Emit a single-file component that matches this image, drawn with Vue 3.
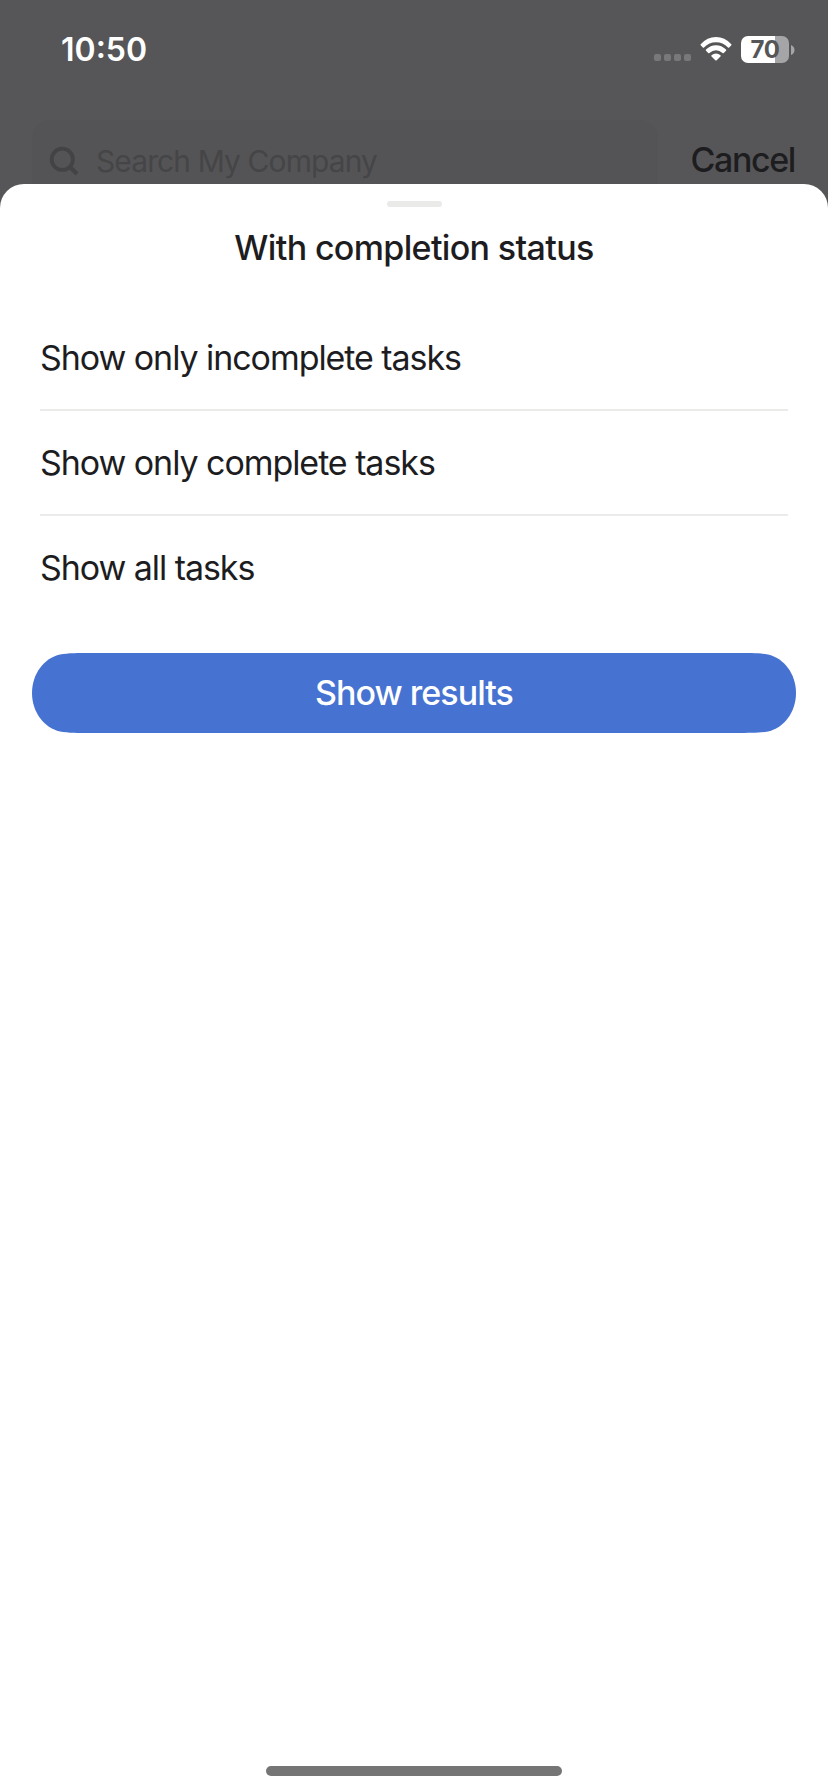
<script setup>
const options = [
  'Show only incomplete tasks',
  'Show only complete tasks',
  'Show all tasks',
]
</script>

<template>
  <div class="screen">
    <header class="status">
      <span class="time">10:50</span>
      <div class="indicators">
        <div class="signal"><i v-for="n in 4" :key="n"></i></div>
        <svg class="wifi" width="32" height="25" viewBox="0 0 32 25">
          <path d="M.7 8.2Q7.2 1 16 1t15.300 7.200q.5.600 0 1.100l-2.100 2.100q-.6.500-1.200 0Q23 6.200 16 6.200T4 11.400q-.600.500-1.200 0L.7 9.300q-.5-.5 0-1.100Z" />
          <path d="M6 13.600Q10.400 9.200 16 9.200t10 4.400q.5.600 0 1.200l-2.200 2.100q-.600.500-1.200 0Q19.500 14.300 16 14.300t-6.600 2.600q-.600.500-1.200 0L6 14.800q-.5-.6 0-1.200Z" />
          <path d="M11.500 19.200Q13.500 17.400 16 17.400t4.500 1.800q.5.600 0 1.200l-3.800 3.800q-.7.700-1.400 0l-3.800-3.800q-.5-.6 0-1.200Z" />
        </svg>
        <div class="battery">
          <div class="cell"><span>70</span></div>
          <svg width="4" height="10" viewBox="0 0 4 10"><path d="M0 0q3.500 1.500 3.500 5T0 10Z" fill="#a5a5a7" /></svg>
        </div>
      </div>
    </header>

    <div class="search-row">
      <div class="search">
        <svg width="30" height="30" viewBox="0 0 30 30" fill="none" stroke="#434345" stroke-width="3.800">
          <circle cx="13.300" cy="13.300" r="10.600" />
          <path d="m21 21 7 7" stroke-width="4.200" />
        </svg>
        <span class="placeholder">Search My Company</span>
      </div>
      <span class="cancel">Cancel</span>
    </div>

    <main class="sheet">
      <div class="grabber"></div>
      <h1>With completion status</h1>
      <ul>
        <li v-for="option in options" :key="option">{{ option }}</li>
      </ul>
      <button type="button">Show results</button>
      <div class="home"></div>
    </main>
  </div>
</template>

<style>
body {
  margin: 0;
  background: #565658;
}
</style>

<style scoped>
.screen {
  box-sizing: border-box;
  width: 828px;
  height: 1792px;
  display: flex;
  flex-direction: column;
  overflow: hidden;
  background: #565658;
  color: #1d1d1f;
  font-family: Inter, "Liberation Sans", sans-serif;
  white-space: nowrap;
}
.status {
  box-sizing: border-box;
  height: 120px;
  flex: none;
  display: flex;
  justify-content: space-between;
  align-items: flex-start;
  padding: 29px 33px 0 61px;
  color: #fff;
}
.time {
  margin-top: 1px;
  font-size: 32px;
  line-height: 40px;
  font-weight: 600;
}
.indicators {
  display: flex;
  align-items: flex-start;
  padding-top: 7px;
}
.signal {
  display: flex;
  gap: 3px;
  margin: 18px 9px 0 0;
}
.signal i {
  width: 7px;
  height: 7px;
  border-radius: 2px;
  background: #78787a;
}
.wifi {
  fill: #fff;
  margin-right: 9px;
}
.battery {
  display: flex;
  align-items: center;
  gap: 2px;
}
.cell {
  width: 48px;
  height: 27px;
  border-radius: 7px;
  background: linear-gradient(90deg, #fff 34px, #a5a5a7 34px);
  color: #565658;
  font-size: 24px;
  line-height: 28px;
  font-weight: 700;
  text-align: center;
  letter-spacing: -0.4px;
}
.search-row {
  height: 64px;
  flex: none;
  display: flex;
  justify-content: space-between;
  padding: 0 33px 0 32px;
}
.search {
  box-sizing: border-box;
  width: 626px;
  height: 64px;
  display: flex;
  align-items: flex-start;
  padding: 26px 0 0 17px;
  border-radius: 18px 18px 0 0;
  background: #545456;
}
.placeholder {
  margin: -5px 0 0 17px;
  font-size: 30px;
  line-height: 40px;
  color: #454547;
  letter-spacing: -0.9px;
}
.cancel {
  margin-top: 20px;
  font-size: 34px;
  line-height: 40px;
  font-weight: 500;
  letter-spacing: -1.4px;
}
.sheet {
  box-sizing: border-box;
  height: 1608px;
  display: flex;
  flex-direction: column;
  align-items: center;
  padding-top: 17px;
  border-radius: 24px 24px 0 0;
  background: #fff;
}
.grabber {
  width: 55px;
  height: 6px;
  border-radius: 3px;
  background: #eaeae9;
}
h1 {
  margin: 21px 0 0;
  height: 40px;
  font-size: 34px;
  line-height: 40px;
  font-weight: 500;
  letter-spacing: -0.65px;
}
ul {
  width: 748px;
  margin: 38px 0 0;
  padding: 0;
  list-style: none;
}
li {
  box-sizing: border-box;
  height: 105px;
  padding-top: 32px;
  border-bottom: 2px solid #ebebea;
  font-size: 34px;
  line-height: 40px;
  letter-spacing: -1.06px;
}
li:last-child {
  border-bottom-color: transparent;
}
button {
  width: 764px;
  height: 80px;
  margin: 32px 0 0;
  padding: 0;
  border: 0;
  clip-path: path("M0 40C0 21 12 5 28 1.500C36 0 46 0 60 0H704C718 0 728 0 736 1.500C752 5 764 21 764 40S752 75 736 78.500C728 80 718 80 704 80H60C46 80 36 80 28 78.500C12 75 0 59 0 40Z");
  background: #4673d1;
  color: #fff;
  font: 500 34px/80px Inter, "Liberation Sans", sans-serif;
  letter-spacing: -0.97px;
}
.home {
  width: 296px;
  height: 10px;
  margin: auto 0 16px;
  border-radius: 5px;
  background: #757575;
}
</style>
